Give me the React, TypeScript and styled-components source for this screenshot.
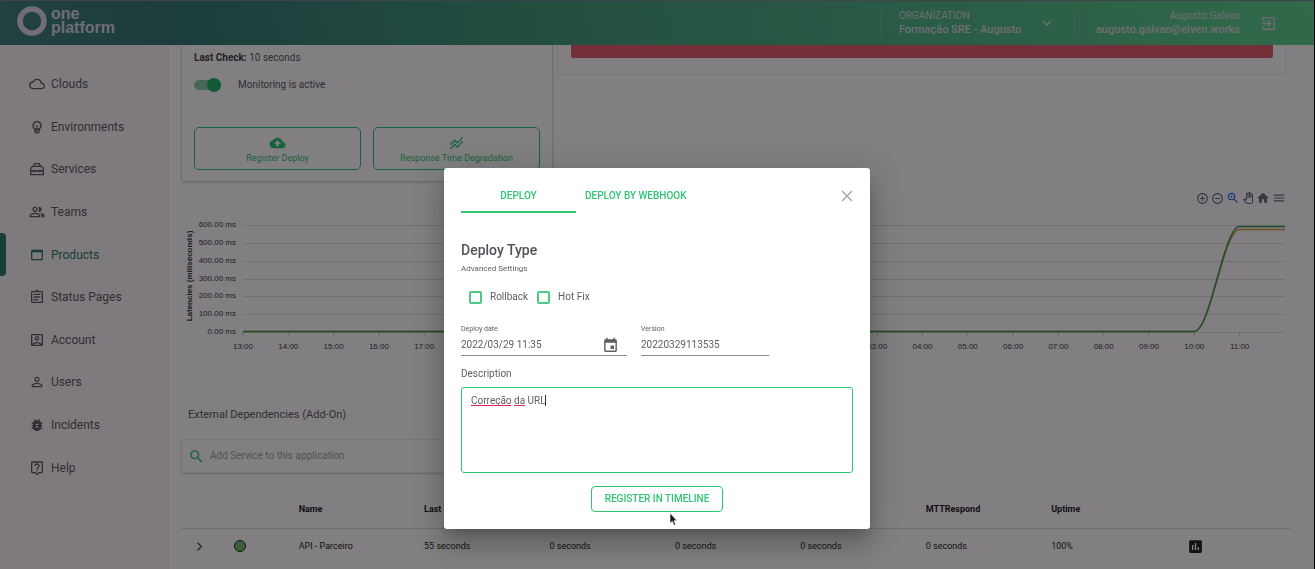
import React, { useState } from "react";
import styled, { createGlobalStyle } from "styled-components";
import {
  MdAddCircleOutline,
  MdBackup,
  MdBugReport,
  MdChevronRight,
  MdCloudQueue,
  MdEvent,
  MdExitToApp,
  MdExpandMore,
  MdHome,
  MdInsertChart,
  MdMenu,
  MdOutlineAccountBox,
  MdOutlineAssignment,
  MdOutlineEmojiObjects,
  MdOutlineLiveHelp,
  MdOutlinePanTool,
  MdOutlinePeopleAlt,
  MdPersonOutline,
  MdRemoveCircleOutline,
  MdSearch,
  MdStackedLineChart,
  MdWebAsset,
  MdZoomIn,
} from "react-icons/md";

const color = {
  green: "#2fc573",
  deepGreen: "#2f7d6b",
  text: "#5f5c63",
  ink: "#262428",
  line: "#dedbde",
};

const GlobalStyle = createGlobalStyle`
  * { box-sizing: border-box; }
  body {
    margin: 0;
    background: #ffffff;
    color: ${color.text};
    font-family: Roboto, "Liberation Sans", sans-serif;
    font-size: 10px;
    line-height: 14px;
  }
  button, input, textarea { font: inherit; color: inherit; }
  button { background: none; border: 0; padding: 0; cursor: pointer; }
  ul { list-style: none; margin: 0; padding: 0; }
  a { color: inherit; text-decoration: none; }
`;

const Shell = styled.div`
  display: flex;
  flex-direction: column;
  height: 100vh;
  overflow: hidden;
  border-right: 1px solid #000000;
`;

/* ---------- top bar ---------- */

const TopBar = styled.header`
  display: flex;
  flex: none;
  align-items: center;
  height: 45px;
  padding: 0 37px 0 17px;
  border-top: 1px solid #7c8794;
  color: #dcdce0;
  background: linear-gradient(80deg, #40847f 0%, #347a74 13%, #388a78 25%, #43a07e 43%, #4db086 62%, #5ed48f 100%);
`;

const Brand = styled.a`
  display: flex;
  align-items: center;
  gap: 4px;
  margin-right: auto;
  font-family: "Liberation Sans", sans-serif;
  font-size: 16px;
  font-weight: 700;
  line-height: 14px;
  padding-bottom: 4px;
`;

const Divider = styled.span`
  width: 1px;
  height: 26px;
  background: #8fb8a6;
`;

const OrgButton = styled.button`
  display: flex;
  align-items: center;
  gap: 12px;
  margin: 0 18px 0 17px;
  text-align: left;
`;

const TwoLines = styled.span<{ $end?: boolean }>`
  display: flex;
  flex-direction: column;
  min-width: ${(p) => (p.$end ? "0" : "127px")};
  text-align: ${(p) => (p.$end ? "right" : "left")};
  margin-left: ${(p) => (p.$end ? "21px" : "0")};

  strong {
    font-size: 11px;
    font-weight: 500;
  }
`;

const ExitButton = styled.button`
  display: flex;
  margin-left: 20px;
`;

/* ---------- side navigation ---------- */

const Columns = styled.div`
  display: flex;
  flex: 1;
  min-height: 0;
`;

const SideNav = styled.nav`
  flex: 0 0 170px;
  padding-top: 18px;
  background: #f8f5f8;
`;

const NavList = styled.ul`
  display: flex;
  flex-direction: column;
  height: 426px;
`;

const NavItem = styled.li<{ $active?: boolean }>`
  display: flex;
  flex: 1;
  color: ${(p) => (p.$active ? color.deepGreen : color.text)};

  &::before {
    content: "";
    width: 6px;
    border-radius: 0 4px 4px 0;
    background: ${(p) => (p.$active ? color.deepGreen : "transparent")};
  }
`;

const NavLink = styled.a`
  display: flex;
  flex: 1;
  align-items: center;
  gap: 5px;
  padding-left: 22px;
  font-size: 12px;

  svg {
    width: 18px;
    height: 16px;
  }
`;

/* ---------- content ---------- */

const Main = styled.main`
  flex: 1;
  min-width: 0;
  padding: 0 23px 0 11px;
  overflow: hidden;
`;

const Cards = styled.div`
  display: flex;
  align-items: flex-start;
  gap: 4px;
  padding-right: 5px;
`;

const Card = styled.section`
  border: 1px solid ${color.line};
  border-top: 0;
  border-radius: 0 0 4px 4px;
  padding: 0 12px 11px;
`;

const MonitorCard = styled(Card)`
  flex: 0 0 372px;
  padding-top: 6px;
  box-shadow: 0 1px 2px rgba(0, 0, 0, 0.14);
`;

const StatusCard = styled(Card)`
  flex: 1;
  border-color: #ece9ec;
  padding: 0 12px 12px 13px;
`;

const AlertBar = styled.div`
  height: 13px;
  margin-bottom: 4px;
  border-radius: 0 0 2px 2px;
  background: #e4606c;
`;

const LastCheck = styled.p`
  margin: 0 0 12px;

  strong {
    color: #454248;
    font-weight: 700;
  }
`;

const SwitchLabel = styled.label`
  display: flex;
  align-items: center;
  gap: 17px;
  height: 16px;
`;

const Switch = styled.input`
  appearance: none;
  display: flex;
  align-items: center;
  justify-content: flex-end;
  width: 27px;
  height: 10px;
  margin: 0;
  border-radius: 5px;
  background: #8bd0aa;

  &::after {
    content: "";
    width: 14px;
    height: 14px;
    border-radius: 50%;
    background: #1fb566;
  }
`;

const Actions = styled.div`
  display: grid;
  grid-template-columns: 1fr 1fr;
  gap: 12px;
  margin-top: 34px;
`;

const ActionButton = styled.button`
  display: flex;
  flex-direction: column;
  align-items: center;
  justify-content: center;
  height: 43px;
  padding-top: 2px;
  border: 1px solid ${color.green};
  border-radius: 5px;
  color: ${color.green};
  font-size: 9px;

  svg {
    width: 17px;
    height: 16px;
  }
`;

const ChartTools = styled.div`
  display: flex;
  justify-content: flex-end;
  align-items: center;
  gap: 2px;
  height: 16px;
  margin-top: 8px;
  padding-right: 5px;
  color: #6e6c80;
`;

const ToolButton = styled.button<{ $on?: boolean }>`
  display: flex;
  color: ${(p) => (p.$on ? "#2f6ff0" : "inherit")};
`;

const ChartSvg = styled.svg`
  display: block;
  width: 100%;
  font-family: "Liberation Sans", sans-serif;
  font-size: 8px;
  fill: #373d3f;
`;

const SectionTitle = styled.h2`
  margin: 50px 0 16px 7px;
  font-size: 11px;
  font-weight: 400;
  line-height: 16px;
`;

const SearchBox = styled.label`
  display: flex;
  align-items: center;
  gap: 5px;
  width: 372px;
  height: 34px;
  padding: 0 6px;
  border: 1px solid #eeebee;
  border-radius: 3px;
  box-shadow: 0 1px 2px rgba(0, 0, 0, 0.2);
  color: ${color.green};

  input {
    flex: 1;
    padding: 0;
    border: 0;
    outline: 0;
    background: none;
  }

  input::placeholder {
    color: #a5a2a7;
    opacity: 1;
  }
`;

const DataTable = styled.table`
  width: 100%;
  margin-top: 17px;
  border-collapse: collapse;
  table-layout: fixed;
  color: ${color.ink};
  font-size: 9px;

  th,
  td {
    height: 36px;
    padding: 0;
    text-align: left;
  }

  th {
    height: 38px;
    font-weight: 700;
    border-bottom: 1px solid ${color.line};
  }
`;

const IconCell = styled.td`
  svg {
    display: block;
  }
`;

const ExpandButton = styled.button`
  display: flex;
  margin-left: 10px;
  color: ${color.text};
`;

const StatusDot = styled.span`
  display: block;
  width: 12px;
  height: 12px;
  border: 1px solid #222222;
  border-radius: 50%;
  background: #6fbf73;
`;

/* ---------- dialog ---------- */

const Backdrop = styled.div`
  position: fixed;
  inset: 0;
  display: flex;
  align-items: flex-start;
  justify-content: center;
  padding: 168px 1px 40px 0;
  background: rgba(3, 0, 3, 0.5);
`;

const Dialog = styled.form`
  width: 426px;
  padding: 10px 17px 17px;
  border-radius: 3px;
  background: #ffffff;
  box-shadow: 0 8px 12px -5px rgba(0, 0, 0, 0.2), 0 17px 26px 2px rgba(0, 0, 0, 0.14),
    0 6px 32px 6px rgba(0, 0, 0, 0.12);
`;

const DialogTop = styled.div`
  display: flex;
  align-items: center;
  justify-content: space-between;
`;

const TabList = styled.div`
  display: flex;
`;

const Tab = styled.button<{ $active?: boolean }>`
  min-width: 115px;
  height: 35px;
  padding: 2px 9px 0;
  border-bottom: 2px solid ${(p) => (p.$active ? color.green : "transparent")};
  color: ${color.green};
  font-weight: 500;
`;

const CloseButton = styled.button`
  display: flex;
  color: #aaa7aa;
`;

const DialogTitle = styled.h1`
  margin: 27px 0 3px;
  color: #55525a;
  font-size: 14px;
  font-weight: 500;
  line-height: 20px;
`;

const Hint = styled.p`
  margin: 0 0 15px;
  font-size: 8px;
  line-height: 12px;
`;

const Checks = styled.div`
  display: flex;
  gap: 9px;
  padding-left: 8px;
`;

const CheckLabel = styled.label`
  display: flex;
  align-items: center;
  gap: 8px;

  input {
    appearance: none;
    width: 13px;
    height: 13px;
    margin: 0;
    border: 2px solid #4ccb86;
    border-radius: 2px;
  }

  input:checked {
    background: ${color.green};
  }
`;

const Fields = styled.div`
  display: flex;
  gap: 14px;
  margin: 20px 0 11px;
`;

const Field = styled.div<{ $width: number }>`
  display: flex;
  flex-direction: column;
  width: ${(p) => p.$width}px;

  label {
    font-size: 7px;
    line-height: 11px;
  }
`;

const FieldLine = styled.div`
  display: flex;
  align-items: center;
  height: 21px;
  padding-right: 8px;
  border-bottom: 1px solid #8d8a8f;

  input {
    flex: 1;
    min-width: 0;
    padding: 0;
    border: 0;
    outline: 0;
    background: none;
  }
`;

const AreaLabel = styled.label`
  display: block;
`;

const AreaWrap = styled.div`
  position: relative;
  margin: 6px 0 13px;
`;

const Area = styled.textarea`
  display: block;
  width: 100%;
  height: 86px;
  padding: 6px 9px;
  border: 1px solid ${color.green};
  border-radius: 3px;
  outline: 0;
  resize: none;
`;

const SpellMarks = styled.svg`
  position: absolute;
  left: 10px;
  top: 7px;
  pointer-events: none;
`;

const SubmitButton = styled.button`
  display: block;
  min-width: 132px;
  height: 26px;
  margin: 0 auto;
  border: 1px solid ${color.green};
  border-radius: 4px;
  color: ${color.green};
  font-weight: 500;
`;

const Pointer = styled.svg`
  position: fixed;
  left: 669px;
  top: 512px;
  pointer-events: none;
`;

function ToolboxIcon() {
  return (
    <svg viewBox="0 0 24 24" fill="none" stroke="currentColor" strokeWidth="2" aria-hidden="true">
      <path d="M2.500 20.500v-6.500c0-3.500 2-6 4.500-6h10c2.500 0 4.500 2.500 4.500 6v6.500z" />
      <path d="M7 8l1.500-4h7L17 8" />
      <path d="M2.500 15h19M7.500 13v4M16.500 13v4" />
    </svg>
  );
}

const navItems = [
  { label: "Clouds", Icon: MdCloudQueue },
  { label: "Environments", Icon: MdOutlineEmojiObjects },
  { label: "Services", Icon: ToolboxIcon },
  { label: "Teams", Icon: MdOutlinePeopleAlt },
  { label: "Products", Icon: MdWebAsset },
  { label: "Status Pages", Icon: MdOutlineAssignment },
  { label: "Account", Icon: MdOutlineAccountBox },
  { label: "Users", Icon: MdPersonOutline },
  { label: "Incidents", Icon: MdBugReport },
  { label: "Help", Icon: MdOutlineLiveHelp },
];

const hours = Array.from({ length: 23 }, (_, i) => `${String((13 + i) % 24).padStart(2, "0")}:00`);
const levels = [600, 500, 400, 300, 200, 100, 0];

function LatencyChart() {
  const left = 62;
  const right = 1104;
  const top = 19;
  const base = 126;
  const step = (base - top) / 6;
  const hourX = (i: number) => left + i * 45.3;
  const rise = (y: number) =>
    `M${left} 125.500H${hourX(21)}C${hourX(21) + 16} 125.500 ${hourX(22) - 16} ${y} ${hourX(22)} ${y}H${right}`;

  return (
    <ChartSvg viewBox="0 0 1110 151" role="img" aria-label="Latencies by hour">
      {levels.map((v, i) => (
        <g key={v}>
          <line x1={left} x2={right} y1={Math.round(top + i * step) + 0.5} y2={Math.round(top + i * step) + 0.5} stroke="#e2dfe2" />
          <text x="55" y={Math.round(top + i * step) + 2} textAnchor="end">{`${v}.00 ms`}</text>
        </g>
      ))}
      {hours.map((h, i) => (
        <g key={h}>
          <line x1={hourX(i)} x2={hourX(i)} y1={base} y2={base + 4} stroke="#d0cdd0" />
          <text x={hourX(i)} y="143" textAnchor="middle">{h}</text>
        </g>
      ))}
      <text transform="translate(11 70) rotate(-90)" textAnchor="middle" fontWeight="700">
        Latencies (miliseconds)
      </text>
      <path d={rise(23.5)} fill="none" stroke="#d8a03c" strokeWidth="1.500" />
      <path d={rise(20.5)} fill="none" stroke="#3f9d5c" strokeWidth="1.500" />
    </ChartSvg>
  );
}

export default function App() {
  const [tab, setTab] = useState(0);
  const [notes, setNotes] = useState("Correção da URL");

  return (
    <>
      <GlobalStyle />
      <Shell>
        <TopBar>
          <Brand href="#">
            <svg width="30" height="30" viewBox="0 0 30 30" aria-hidden="true">
              <circle cx="15" cy="15" r="12" fill="none" stroke="currentColor" strokeWidth="5.500" />
            </svg>
            <span>
              one
              <br />
              platform
            </span>
          </Brand>
          <Divider />
          <OrgButton type="button">
            <TwoLines>
              <span>ORGANIZATION</span>
              <strong>Formação SRE - Augusto</strong>
            </TwoLines>
            <MdExpandMore size={18} />
          </OrgButton>
          <Divider />
          <TwoLines $end>
            <span>Augusto Galvao</span>
            <strong>augusto.galvao@elven.works</strong>
          </TwoLines>
          <ExitButton type="button" aria-label="Sign out">
            <MdExitToApp size={17} />
          </ExitButton>
        </TopBar>

        <Columns>
          <SideNav>
            <NavList>
              {navItems.map(({ label, Icon }) => (
                <NavItem key={label} $active={label === "Products"}>
                  <NavLink href="#">
                    <Icon />
                    {label}
                  </NavLink>
                </NavItem>
              ))}
            </NavList>
          </SideNav>

          <Main>
            <Cards>
              <MonitorCard>
                <LastCheck>
                  <strong>Last Check:</strong> 10 seconds
                </LastCheck>
                <SwitchLabel>
                  <Switch type="checkbox" role="switch" defaultChecked />
                  Monitoring is active
                </SwitchLabel>
                <Actions>
                  <ActionButton type="button">
                    <MdBackup />
                    Register Deploy
                  </ActionButton>
                  <ActionButton type="button">
                    <MdStackedLineChart />
                    Response Time Degradation
                  </ActionButton>
                </Actions>
              </MonitorCard>
              <StatusCard>
                <AlertBar />
              </StatusCard>
            </Cards>

            <ChartTools>
              <ToolButton type="button" aria-label="Zoom in"><MdAddCircleOutline size={13} /></ToolButton>
              <ToolButton type="button" aria-label="Zoom out"><MdRemoveCircleOutline size={13} /></ToolButton>
              <ToolButton type="button" aria-label="Selection zoom" $on><MdZoomIn size={14} /></ToolButton>
              <ToolButton type="button" aria-label="Pan"><MdOutlinePanTool size={12} /></ToolButton>
              <ToolButton type="button" aria-label="Reset zoom"><MdHome size={14} /></ToolButton>
              <ToolButton type="button" aria-label="Menu"><MdMenu size={14} /></ToolButton>
            </ChartTools>
            <LatencyChart />

            <SectionTitle>External Dependencies (Add-On)</SectionTitle>
            <SearchBox>
              <MdSearch size={17} />
              <input type="text" placeholder="Add Service to this application" aria-label="Add Service to this application" />
            </SearchBox>

            <DataTable>
              <colgroup>
                <col style={{ width: "4.8%" }} />
                <col style={{ width: "5.8%" }} />
                <col style={{ width: "11.3%" }} />
                <col style={{ width: "11.3%" }} />
                <col style={{ width: "11.3%" }} />
                <col style={{ width: "11.3%" }} />
                <col style={{ width: "11.3%" }} />
                <col style={{ width: "11.3%" }} />
                <col style={{ width: "12.2%" }} />
                <col />
              </colgroup>
              <thead>
                <tr>
                  <th />
                  <th />
                  <th>Name</th>
                  <th>Last Check</th>
                  <th>MTBF</th>
                  <th>MTTA</th>
                  <th>MTTR</th>
                  <th>MTTRespond</th>
                  <th>Uptime</th>
                  <th />
                </tr>
              </thead>
              <tbody>
                <tr>
                  <IconCell>
                    <ExpandButton type="button" aria-label="Expand row">
                      <MdChevronRight size={17} />
                    </ExpandButton>
                  </IconCell>
                  <td><StatusDot /></td>
                  <td>API - Parceiro</td>
                  <td>55 seconds</td>
                  <td>0 seconds</td>
                  <td>0 seconds</td>
                  <td>0 seconds</td>
                  <td>0 seconds</td>
                  <td>100%</td>
                  <IconCell><MdInsertChart size={17} /></IconCell>
                </tr>
              </tbody>
            </DataTable>
          </Main>
        </Columns>
      </Shell>

      <Backdrop>
        <Dialog role="dialog" aria-modal="true" aria-labelledby="deploy-title" onSubmit={(e) => e.preventDefault()}>
          <DialogTop>
            <TabList role="tablist">
              <Tab type="button" role="tab" aria-selected={tab === 0} $active={tab === 0} onClick={() => setTab(0)}>
                DEPLOY
              </Tab>
              <Tab type="button" role="tab" aria-selected={tab === 1} $active={tab === 1} onClick={() => setTab(1)}>
                DEPLOY BY WEBHOOK
              </Tab>
            </TabList>
            <CloseButton type="button" aria-label="Close">
              <svg width="12" height="12" viewBox="0 0 12 12" stroke="currentColor" strokeWidth="1.500">
                <path d="M1 1l10 10M11 1L1 11" />
              </svg>
            </CloseButton>
          </DialogTop>

          <DialogTitle id="deploy-title">Deploy Type</DialogTitle>
          <Hint>Advanced Settings</Hint>

          <Checks>
            <CheckLabel>
              <input type="checkbox" />
              Rollback
            </CheckLabel>
            <CheckLabel>
              <input type="checkbox" />
              Hot Fix
            </CheckLabel>
          </Checks>

          <Fields>
            <Field $width={166}>
              <label htmlFor="deploy-date">Deploy date</label>
              <FieldLine>
                <input id="deploy-date" type="text" defaultValue="2022/03/29 11:35" />
                <MdEvent size={17} />
              </FieldLine>
            </Field>
            <Field $width={128}>
              <label htmlFor="deploy-version">Version</label>
              <FieldLine>
                <input id="deploy-version" type="text" defaultValue="20220329113535" />
              </FieldLine>
            </Field>
          </Fields>

          <AreaLabel htmlFor="deploy-notes">Description</AreaLabel>
          <AreaWrap>
            <Area id="deploy-notes" spellCheck={false} value={notes} onChange={(e) => setNotes(e.target.value)} />
            {notes === "Correção da URL" && (
              <SpellMarks width="78" height="14" aria-hidden="true">
                <path d="M0 11.500H40M43 11.500H54" stroke="#e0245e" />
                <path d="M74.500 1V12" stroke="#333333" />
              </SpellMarks>
            )}
          </AreaWrap>

          <SubmitButton type="submit">REGISTER IN TIMELINE</SubmitButton>
        </Dialog>
      </Backdrop>

      <Pointer width="9" height="14" viewBox="0 0 9 14" aria-hidden="true">
        <path d="M1 1v10.500l2.300-2.200 1.600 3.900 1.700-.7-1.600-3.800h3z" fill="#1c1c1c" stroke="#ffffff" strokeWidth=".6" />
      </Pointer>
    </>
  );
}
